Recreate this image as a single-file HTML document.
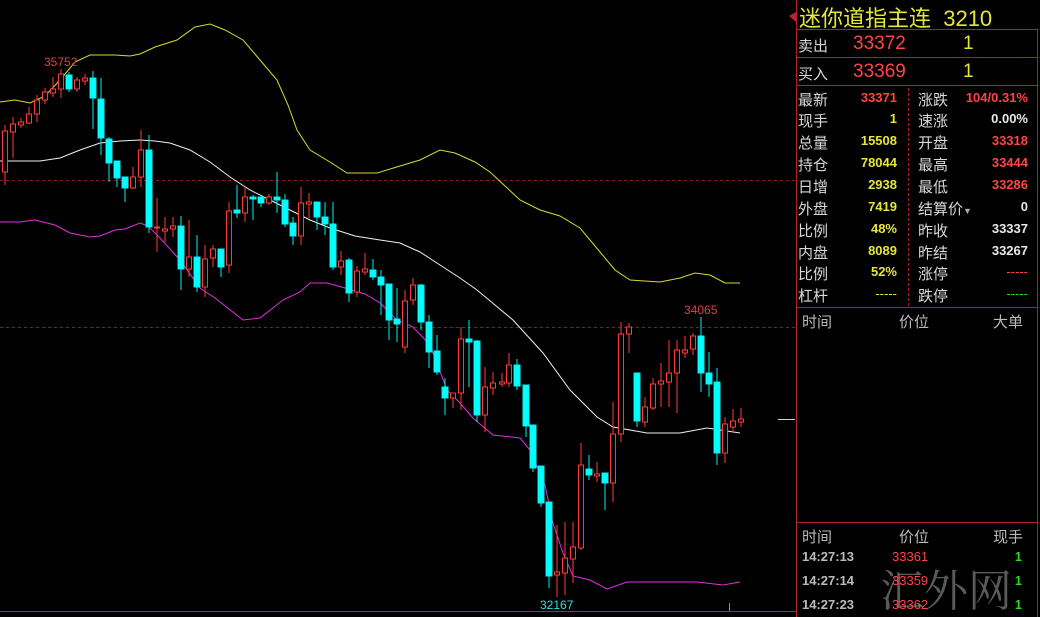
<!DOCTYPE html>
<html><head><meta charset="utf-8"><style>
html,body{margin:0;padding:0;background:#000;width:1040px;height:617px;overflow:hidden;position:relative;font-family:"Liberation Sans","Noto Sans CJK SC",sans-serif}
.t{position:absolute;white-space:nowrap}
.l{font-size:15px;color:#d8d8d8}
.v{font-size:13px;font-weight:bold;text-align:right}
.y{color:#e6e63a}.r{color:#ff4444}.w{color:#e8e8e8}.g{color:#22dd22}.gr{color:#bbb}
</style></head><body>
<svg width="1040" height="617" style="position:absolute;left:0;top:0">
<line x1="0" y1="180.5" x2="795" y2="180.5" stroke="#8a1c1c" stroke-dasharray="3,3"/>
<line x1="0" y1="327.5" x2="795" y2="327.5" stroke="#8a1c1c" stroke-dasharray="3,3"/>
<line x1="0" y1="611.5" x2="796" y2="611.5" stroke="#c02030"/>
<line x1="729.5" y1="603" x2="729.5" y2="611" stroke="#888"/>
<line x1="778" y1="419.5" x2="795" y2="419.5" stroke="#e6e63a"/>
<polyline fill="none" stroke="#dada30" points="0,102 15,100 30,103 45,96 60,80 75,62 90,55 115,55 130,56 140,54 155,47 177,40 195,27 210,24 225,30 243,40 260,60 277,80 288,105 297,130 310,150 330,162 347,173 377,173 400,166 420,160 440,150 455,153 475,162 490,172 505,186 520,200 540,210 560,216 580,228 600,252 615,270 630,280 660,282 680,278 695,273 710,275 725,283 740,283"/>
<polyline fill="none" stroke="#f0f0f0" points="0,161 40,161 60,158 80,150 100,143 120,141 140,140 155,141 170,143 190,150 210,162 230,177 250,190 270,200 290,210 310,220 330,228 355,236 380,240 400,243 420,252 440,265 460,278 477,290 495,305 513,320 543,353 570,390 597,417 613,427 647,433 680,433 707,428 740,433"/>
<polyline fill="none" stroke="#e030e0" points="0,222 20,222 35,220 55,225 70,233 90,237 100,236 115,230 125,229 140,223 148,226 160,238 180,260 200,288 215,298 243,320 260,318 283,300 300,292 310,283 327,283 345,288 365,294 380,303 397,320 413,327 430,345 447,390 460,403 473,418 493,435 520,438 530,450 545,485 553,523 563,553 573,576 590,580 607,589 627,582 663,582 697,582 723,585 740,582"/>
<text x="44" y="66" fill="#e04040" font-size="12" font-family="Liberation Sans">35752</text>
<text x="684" y="314" fill="#e04040" font-size="12" font-family="Liberation Sans">34065</text>
<text x="540" y="609" fill="#30e0e0" font-size="12" font-family="Liberation Sans">32167</text>
<g stroke="#ff3c3c" fill="#000">
<line x1="5" y1="125" x2="5" y2="185"/><rect x="2.5" y="131" width="5" height="41"/>
<line x1="13" y1="117" x2="13" y2="158"/><rect x="10.5" y="124" width="5" height="8"/>
<line x1="21" y1="118" x2="21" y2="128"/><rect x="18.5" y="122" width="5" height="3"/>
<line x1="29" y1="107" x2="29" y2="124"/><rect x="26.5" y="114" width="5" height="9"/>
<line x1="37" y1="95" x2="37" y2="122"/><rect x="34.5" y="100" width="5" height="14"/>
<line x1="45" y1="88" x2="45" y2="104"/><rect x="42.5" y="92" width="5" height="8"/>
<line x1="53" y1="77" x2="53" y2="97"/><rect x="50.5" y="89" width="5" height="4"/>
<line x1="61" y1="69" x2="61" y2="98"/><rect x="58.5" y="74" width="5" height="15"/>
<line x1="77" y1="77" x2="77" y2="92"/><rect x="74.5" y="80" width="5" height="9"/>
<line x1="85" y1="74" x2="85" y2="85"/><rect x="82.5" y="78" width="5" height="3"/>
<line x1="133" y1="167" x2="133" y2="189"/><rect x="130.5" y="177" width="5" height="11"/>
<line x1="141" y1="130" x2="141" y2="187"/><rect x="138.5" y="150" width="5" height="27"/>
<line x1="157" y1="198" x2="157" y2="252"/><rect x="154.5" y="227" width="5" height="1"/>
<line x1="165" y1="217" x2="165" y2="242"/><rect x="162.5" y="229" width="5" height="2"/>
<line x1="173" y1="217" x2="173" y2="237"/><rect x="170.5" y="226" width="5" height="3"/>
<line x1="189" y1="220" x2="189" y2="277"/><rect x="186.5" y="257" width="5" height="12"/>
<line x1="205" y1="245" x2="205" y2="297"/><rect x="202.5" y="259" width="5" height="28"/>
<line x1="213" y1="245" x2="213" y2="267"/><rect x="210.5" y="249" width="5" height="9"/>
<line x1="229" y1="202" x2="229" y2="273"/><rect x="226.5" y="211" width="5" height="54"/>
<line x1="245" y1="187" x2="245" y2="222"/><rect x="242.5" y="197" width="5" height="16"/>
<line x1="269" y1="194" x2="269" y2="205"/><rect x="266.5" y="197" width="5" height="6"/>
<line x1="301" y1="187" x2="301" y2="245"/><rect x="298.5" y="203" width="5" height="33"/>
<line x1="309" y1="193" x2="309" y2="218"/><rect x="306.5" y="202" width="5" height="2"/>
<line x1="341" y1="251" x2="341" y2="275"/><rect x="338.5" y="261" width="5" height="6"/>
<line x1="357" y1="266" x2="357" y2="297"/><rect x="354.5" y="271" width="5" height="21"/>
<line x1="365" y1="253" x2="365" y2="275"/><rect x="362.5" y="269" width="5" height="3"/>
<line x1="405" y1="290" x2="405" y2="353"/><rect x="402.5" y="301" width="5" height="46"/>
<line x1="413" y1="278" x2="413" y2="305"/><rect x="410.5" y="285" width="5" height="15"/>
<line x1="453" y1="393" x2="453" y2="408"/><rect x="450.5" y="393" width="5" height="5"/>
<line x1="461" y1="327" x2="461" y2="410"/><rect x="458.5" y="339" width="5" height="54"/>
<line x1="485" y1="367" x2="485" y2="432"/><rect x="482.5" y="387" width="5" height="28"/>
<line x1="493" y1="372" x2="493" y2="395"/><rect x="490.5" y="383" width="5" height="5"/>
<line x1="502" y1="373" x2="502" y2="387"/><rect x="499.5" y="382" width="5" height="2"/>
<line x1="509" y1="353" x2="509" y2="387"/><rect x="506.5" y="365" width="5" height="18"/>
<line x1="557" y1="525" x2="557" y2="597"/><rect x="554.5" y="572" width="5" height="3"/>
<line x1="565" y1="522" x2="565" y2="595"/><rect x="562.5" y="558" width="5" height="15"/>
<line x1="573" y1="522" x2="573" y2="583"/><rect x="570.5" y="547" width="5" height="12"/>
<line x1="581" y1="443" x2="581" y2="550"/><rect x="578.5" y="465" width="5" height="83"/>
<line x1="597" y1="462" x2="597" y2="482"/><rect x="594.5" y="474" width="5" height="2"/>
<line x1="613" y1="402" x2="613" y2="502"/><rect x="610.5" y="434" width="5" height="49"/>
<line x1="621" y1="322" x2="621" y2="442"/><rect x="618.5" y="334" width="5" height="100"/>
<line x1="629" y1="323" x2="629" y2="353"/><rect x="626.5" y="327" width="5" height="7"/>
<line x1="645" y1="397" x2="645" y2="427"/><rect x="642.5" y="407" width="5" height="15"/>
<line x1="653" y1="378" x2="653" y2="410"/><rect x="650.5" y="384" width="5" height="24"/>
<line x1="661" y1="363" x2="661" y2="407"/><rect x="658.5" y="381" width="5" height="3"/>
<line x1="669" y1="340" x2="669" y2="407"/><rect x="666.5" y="373" width="5" height="9"/>
<line x1="677" y1="340" x2="677" y2="413"/><rect x="674.5" y="350" width="5" height="23"/>
<line x1="685" y1="336" x2="685" y2="358"/><rect x="682.5" y="350" width="5" height="3"/>
<line x1="693" y1="333" x2="693" y2="355"/><rect x="690.5" y="336" width="5" height="13"/>
<line x1="725" y1="417" x2="725" y2="463"/><rect x="722.5" y="424" width="5" height="29"/>
<line x1="733" y1="409" x2="733" y2="433"/><rect x="730.5" y="421" width="5" height="6"/>
<line x1="741" y1="408" x2="741" y2="427"/><rect x="738.5" y="419" width="5" height="3"/>
</g>
<g stroke="#00f0f0" fill="#00ffff">
<line x1="69" y1="72" x2="69" y2="92"/><rect x="66" y="75" width="6" height="14"/>
<line x1="93" y1="71" x2="93" y2="129"/><rect x="90" y="78" width="6" height="20"/>
<line x1="101" y1="78" x2="101" y2="155"/><rect x="98" y="99" width="6" height="39"/>
<line x1="109" y1="137" x2="109" y2="182"/><rect x="106" y="139" width="6" height="24"/>
<line x1="117" y1="161" x2="117" y2="187"/><rect x="114" y="161" width="6" height="17"/>
<line x1="125" y1="177" x2="125" y2="202"/><rect x="122" y="177" width="6" height="11"/>
<line x1="149" y1="135" x2="149" y2="233"/><rect x="146" y="150" width="6" height="77"/>
<line x1="181" y1="216" x2="181" y2="290"/><rect x="178" y="226" width="6" height="43"/>
<line x1="197" y1="235" x2="197" y2="292"/><rect x="194" y="257" width="6" height="30"/>
<line x1="221" y1="249" x2="221" y2="277"/><rect x="218" y="249" width="6" height="18"/>
<line x1="237" y1="185" x2="237" y2="218"/><rect x="234" y="210" width="6" height="3"/>
<line x1="253" y1="195" x2="253" y2="220"/><rect x="250" y="197" width="6" height="2"/>
<line x1="261" y1="197" x2="261" y2="207"/><rect x="258" y="197" width="6" height="6"/>
<line x1="277" y1="172" x2="277" y2="213"/><rect x="274" y="197" width="6" height="3"/>
<line x1="285" y1="194" x2="285" y2="227"/><rect x="282" y="200" width="6" height="24"/>
<line x1="293" y1="217" x2="293" y2="245"/><rect x="290" y="223" width="6" height="13"/>
<line x1="317" y1="202" x2="317" y2="230"/><rect x="314" y="202" width="6" height="15"/>
<line x1="325" y1="202" x2="325" y2="235"/><rect x="322" y="217" width="6" height="7"/>
<line x1="333" y1="202" x2="333" y2="270"/><rect x="330" y="224" width="6" height="43"/>
<line x1="349" y1="258" x2="349" y2="302"/><rect x="346" y="260" width="6" height="33"/>
<line x1="373" y1="259" x2="373" y2="280"/><rect x="370" y="270" width="6" height="7"/>
<line x1="381" y1="270" x2="381" y2="315"/><rect x="378" y="277" width="6" height="8"/>
<line x1="389" y1="284" x2="389" y2="340"/><rect x="386" y="284" width="6" height="36"/>
<line x1="397" y1="288" x2="397" y2="342"/><rect x="394" y="319" width="6" height="5"/>
<line x1="421" y1="284" x2="421" y2="330"/><rect x="418" y="285" width="6" height="37"/>
<line x1="429" y1="315" x2="429" y2="368"/><rect x="426" y="322" width="6" height="30"/>
<line x1="437" y1="335" x2="437" y2="375"/><rect x="434" y="351" width="6" height="21"/>
<line x1="445" y1="378" x2="445" y2="415"/><rect x="442" y="387" width="6" height="11"/>
<line x1="469" y1="320" x2="469" y2="387"/><rect x="466" y="339" width="6" height="3"/>
<line x1="477" y1="340" x2="477" y2="422"/><rect x="474" y="341" width="6" height="74"/>
<line x1="517" y1="359" x2="517" y2="390"/><rect x="514" y="365" width="6" height="21"/>
<line x1="526" y1="385" x2="526" y2="437"/><rect x="523" y="385" width="6" height="41"/>
<line x1="533" y1="425" x2="533" y2="472"/><rect x="530" y="425" width="6" height="43"/>
<line x1="541" y1="466" x2="541" y2="507"/><rect x="538" y="466" width="6" height="37"/>
<line x1="549" y1="502" x2="549" y2="588"/><rect x="546" y="502" width="6" height="74"/>
<line x1="589" y1="455" x2="589" y2="480"/><rect x="586" y="469" width="6" height="6"/>
<line x1="605" y1="473" x2="605" y2="510"/><rect x="602" y="473" width="6" height="10"/>
<line x1="637" y1="373" x2="637" y2="427"/><rect x="634" y="373" width="6" height="48"/>
<line x1="701" y1="317" x2="701" y2="392"/><rect x="698" y="336" width="6" height="37"/>
<line x1="709" y1="352" x2="709" y2="397"/><rect x="706" y="373" width="6" height="11"/>
<line x1="717" y1="368" x2="717" y2="465"/><rect x="714" y="382" width="6" height="71"/>
</g>
<g stroke="#b0202a" fill="none">
<line x1="796.5" y1="0" x2="796.5" y2="617"/>
<line x1="1037.5" y1="29" x2="1037.5" y2="617"/>
<line x1="796" y1="29.5" x2="1038" y2="29.5"/>
<line x1="796" y1="57.5" x2="1038" y2="57.5"/>
<line x1="796" y1="85.5" x2="1038" y2="85.5"/>
<line x1="796" y1="307.5" x2="1038" y2="307.5"/>
<line x1="796" y1="522.5" x2="1038" y2="522.5"/>
<line x1="908.5" y1="88" x2="908.5" y2="306" stroke-dasharray="3,2"/>
</g>
<polygon points="789,16 796,12 796,22" fill="#c02030"/>
</svg>
<div class="t y" style="left:799px;top:1px;font-size:22px">迷你道指主连&nbsp;&nbsp;3210</div>
<div class="t l" style="left:798px;top:35px">卖出</div>
<div class="t r" style="left:853px;top:33px;font-size:19px">33372</div>
<div class="t y" style="left:963px;top:33px;font-size:19px">1</div>
<div class="t l" style="left:798px;top:63px">买入</div>
<div class="t r" style="left:853px;top:61px;font-size:19px">33369</div>
<div class="t y" style="left:963px;top:61px;font-size:19px">1</div>

<div class="t l" style="left:798px;top:89px">最新</div><div class="t v r" style="right:143px;top:90px">33371</div>
<div class="t l" style="left:918px;top:89px">涨跌</div><div class="t v r" style="right:12px;top:90px">104/0.31%</div>
<div class="t l" style="left:798px;top:110px">现手</div><div class="t v y" style="right:143px;top:111px">1</div>
<div class="t l" style="left:918px;top:110px">速涨</div><div class="t v w" style="right:12px;top:111px">0.00%</div>
<div class="t l" style="left:798px;top:132px">总量</div><div class="t v y" style="right:143px;top:133px">15508</div>
<div class="t l" style="left:918px;top:132px">开盘</div><div class="t v r" style="right:12px;top:133px">33318</div>
<div class="t l" style="left:798px;top:154px">持仓</div><div class="t v y" style="right:143px;top:155px">78044</div>
<div class="t l" style="left:918px;top:154px">最高</div><div class="t v r" style="right:12px;top:155px">33444</div>
<div class="t l" style="left:798px;top:176px">日增</div><div class="t v y" style="right:143px;top:177px">2938</div>
<div class="t l" style="left:918px;top:176px">最低</div><div class="t v r" style="right:12px;top:177px">33286</div>
<div class="t l" style="left:798px;top:198px">外盘</div><div class="t v y" style="right:143px;top:199px">7419</div>
<div class="t l" style="left:918px;top:198px">结算价<span style="font-size:9px;color:#aaa">▼</span></div><div class="t v w" style="right:12px;top:199px">0</div>
<div class="t l" style="left:798px;top:220px">比例</div><div class="t v y" style="right:143px;top:221px">48%</div>
<div class="t l" style="left:918px;top:220px">昨收</div><div class="t v w" style="right:12px;top:221px">33337</div>
<div class="t l" style="left:798px;top:242px">内盘</div><div class="t v y" style="right:143px;top:243px">8089</div>
<div class="t l" style="left:918px;top:242px">昨结</div><div class="t v w" style="right:12px;top:243px">33267</div>
<div class="t l" style="left:798px;top:263px">比例</div><div class="t v y" style="right:143px;top:264px">52%</div>
<div class="t l" style="left:918px;top:263px">涨停</div><div class="t v r" style="right:12px;top:264px;font-weight:normal">-----</div>
<div class="t l" style="left:798px;top:285px">杠杆</div><div class="t v y" style="right:143px;top:286px;font-weight:normal">-----</div>
<div class="t l" style="left:918px;top:285px">跌停</div><div class="t v g" style="right:12px;top:286px;font-weight:normal">-----</div>

<div class="t l gr" style="left:802px;top:311px">时间</div>
<div class="t l gr" style="left:899px;top:311px">价位</div>
<div class="t l gr" style="left:993px;top:311px">大单</div>

<div class="t l gr" style="left:802px;top:526px">时间</div>
<div class="t l gr" style="left:899px;top:526px">价位</div>
<div class="t l gr" style="left:993px;top:526px">现手</div>
<div class="t" style="left:880px;top:555px;font-size:44px;color:#5a5a5a;font-family:'Noto Serif CJK SC',serif">汇外网</div>
<div class="t v gr" style="left:802px;top:549px;text-align:left">14:27:13</div><div class="t v r" style="left:892px;top:549px;text-align:left;font-weight:normal">33361</div><div class="t v g" style="right:18px;top:549px">1</div>
<div class="t v gr" style="left:802px;top:573px;text-align:left">14:27:14</div><div class="t v r" style="left:892px;top:573px;text-align:left;font-weight:normal">33359</div><div class="t v g" style="right:18px;top:573px">1</div>
<div class="t v gr" style="left:802px;top:597px;text-align:left">14:27:23</div><div class="t v r" style="left:892px;top:597px;text-align:left;font-weight:normal">33362</div><div class="t v g" style="right:18px;top:597px">1</div>
</body></html>
